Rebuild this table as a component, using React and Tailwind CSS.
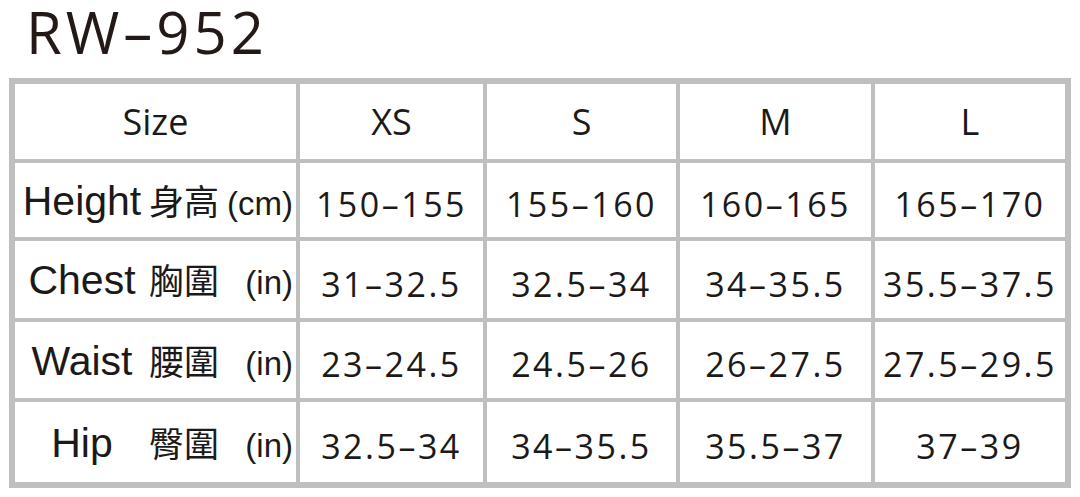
import { Fragment } from "react";

const sizes = ["XS", "S", "M", "L"];

const rows = [
    { en: "Height", zh: "身高", unit: "(cm)", values: ["150–155", "155–160", "160–165", "165–170"] },
    { en: "Chest", zh: "胸圍", unit: "(in)", values: ["31–32.5", "32.5–34", "34–35.5", "35.5–37.5"] },
    { en: "Waist", zh: "腰圍", unit: "(in)", values: ["23–24.5", "24.5–26", "26–27.5", "27.5–29.5"] },
    { en: "Hip", zh: "臀圍", unit: "(in)", values: ["32.5–34", "34–35.5", "35.5–37", "37–39"] },
];

const LabelCell = ({ en, zh, unit }) => (
    <div className="bg-white flex items-center pt-[2px]">
        <div className="flex items-baseline w-full pr-[3px] text-[#1c1a19]">
            <span className="w-[134px] shrink-0 text-center text-[41px] leading-none font-['Liberation_Sans',Arial,sans-serif]">
                {en}
            </span>
            <span className="text-[35px] leading-none font-['Noto_Sans_CJK_TC','Noto_Sans_CJK_SC',sans-serif]">
                {zh}
            </span>
            <span className="ml-auto text-[33px] leading-none font-['Liberation_Sans',Arial,sans-serif]">
                {unit}
            </span>
        </div>
    </div>
);

const ValueCell = ({ children }) => (
    <div className="bg-white flex items-center justify-center pt-[8px] text-[34px] leading-none tracking-[2.5px] text-[#1c1a19] font-['Open_Sans','Noto_Sans',sans-serif]">
        {children}
    </div>
);

export default function App() {
    return (
        <div className="w-[1080px] h-[497px] bg-white overflow-hidden">
            <div className="pl-[26px]">
                <h1 className="text-[58px] leading-[64px] font-normal tracking-[4px] text-[#231916] font-['Open_Sans','Noto_Sans',sans-serif]">
                    RW–952
                </h1>
            </div>

            <div className="mt-[14px] ml-[9px] w-[1062px] border-[6px] border-[#bfbfbf] bg-[#bfbfbf]">
                <div className="grid grid-cols-[281px_183px_189px_191px_190px] grid-rows-[75px_74px_77px_76px_80px] gap-[4px]">
                    {/* header row */}
                    <div className="bg-white flex items-center justify-center text-[36px] leading-none text-[#1c1a19] font-['Open_Sans','Noto_Sans',sans-serif]">
                        Size
                    </div>
                    {sizes.map(s => (
                        <div
                            key={s}
                            className="bg-white flex items-center justify-center text-[36px] leading-none text-[#1c1a19] font-['Open_Sans','Noto_Sans',sans-serif]">
                            {s}
                        </div>
                    ))}

                    {rows.map(r => (
                        <Fragment key={r.en}>
                            <LabelCell en={r.en} zh={r.zh} unit={r.unit} />
                            {r.values.map((v, i) => (
                                <ValueCell key={r.en + i}>{v}</ValueCell>
                            ))}
                        </Fragment>
                    ))}
                </div>
            </div>
        </div>
    );
}
